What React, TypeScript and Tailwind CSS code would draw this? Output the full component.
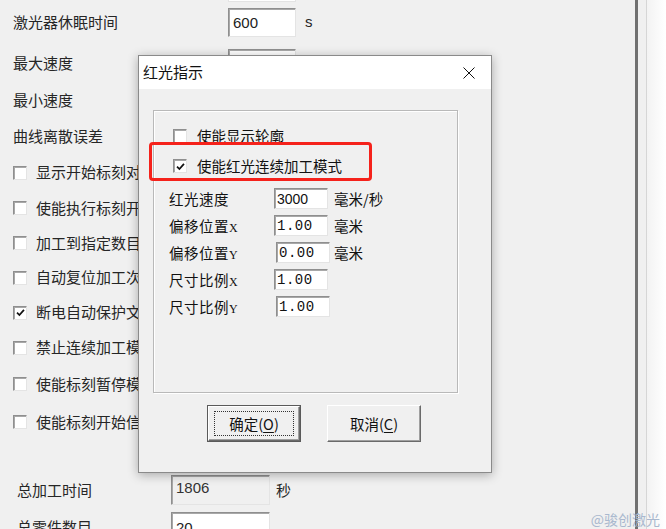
import type { ReactNode } from "react";

const sunken =
  "border border-t-[#8f8f8f] border-l-[#8f8f8f] border-r-[#e4e4e4] border-b-[#e4e4e4] shadow-[inset_1px_1px_0_#a8a8a8]";

function Tick() {
  return (
    <svg viewBox="0 0 12 12" className="h-[11px] w-[11px]">
      <path d="M2.2 6.2 L4.8 8.8 L9.8 3.2" fill="none" stroke="#111" strokeWidth="1.9" />
    </svg>
  );
}

function CheckBox({ checked = false }: { checked?: boolean }) {
  return (
    <span className={`flex h-[14px] w-[14px] shrink-0 items-center justify-center bg-white ${sunken}`}>
      {checked && <Tick />}
    </span>
  );
}

function Field({ value = "", className = "" }: { value?: string; className?: string }) {
  return (
    <div className={`flex shrink-0 items-center bg-white pl-[4px] ${sunken} ${className}`}>
      <span className="font-['Liberation_Sans',sans-serif] text-[15px] leading-none text-[#222]">{value}</span>
    </div>
  );
}

function OptionRow({ label, checked, h }: { label: string; checked?: boolean; h: string }) {
  return (
    <div className={`flex items-center gap-[9px] whitespace-nowrap pl-[13px] ${h}`}>
      <CheckBox checked={checked} />
      <span>{label}</span>
    </div>
  );
}

function SettingsPanel() {
  return (
    <div className="w-[635px] shrink-0 text-[15px] text-[#262626]">
      {/* tail of the row scrolled above */}
      <div className="pl-[228px]">
        <div className="h-[2px] w-[68px] border-x border-b border-[#e4e4e4] bg-white" />
      </div>

      <div className="flex h-[41px] items-center pl-[13px]">
        <span className="w-[215px]">激光器休眠时间</span>
        <Field value="600" className="h-[29px] w-[68px]" />
        <span className="ml-[9px] font-['Liberation_Sans',sans-serif]">s</span>
      </div>
      <div className="flex h-[40px] items-center pl-[13px]">
        <span className="w-[215px]">最大速度</span>
        <Field value="10000" className="h-[29px] w-[68px]" />
        <span className="ml-[9px] font-['Liberation_Sans',sans-serif]">s</span>
      </div>
      <div className="flex h-[35px] items-center pl-[13px]">
        <span className="w-[215px]">最小速度</span>
        <Field className="h-[29px] w-[68px]" />
      </div>
      <div className="flex h-[37px] items-center pl-[13px]">
        <span className="w-[215px]">曲线离散误差</span>
        <Field className="h-[29px] w-[68px]" />
      </div>

      <OptionRow h="h-[35px]" label="显示开始标刻对" />
      <OptionRow h="h-[36px]" label="使能执行标刻开" />
      <OptionRow h="h-[34px]" label="加工到指定数目" />
      <OptionRow h="h-[35px]" label="自动复位加工次" />
      <OptionRow h="h-[35px]" label="断电自动保护文" checked />
      <OptionRow h="h-[35px]" label="禁止连续加工模" />
      <OptionRow h="h-[38px]" label="使能标刻暂停模" />
      <OptionRow h="h-[38px]" label="使能标刻开始信" />

      <div className="h-[32px]" />

      <div className="flex h-[34px] items-center pl-[17px]">
        <span className="w-[154px]">总加工时间</span>
        <div className={`flex h-[30px] w-[99px] items-start bg-[#f0f0f0] pl-[4px] pt-[3px] ${sunken}`}>
          <span className="font-['Liberation_Sans',sans-serif] text-[15px] leading-[18px] text-[#333]">1806</span>
        </div>
        <span className="ml-[6px]">秒</span>
      </div>
      <div className="flex h-[40px] items-center pl-[17px]">
        <span className="w-[154px]">总零件数目</span>
        <Field value="20" className="h-[30px] w-[99px]" />
      </div>
    </div>
  );
}

function DialogField({ value, mono, className = "" }: { value: string; mono?: boolean; className?: string }) {
  return (
    <div className={`flex h-[21px] w-[54px] items-center bg-white pl-[2px] ${sunken} ${className}`}>
      <span
        className={
          mono
            ? "font-['Liberation_Mono',monospace] text-[14px] leading-none tracking-[0.5px]"
            : "font-['Liberation_Sans',sans-serif] text-[14px] leading-none"
        }
      >
        {value}
      </span>
    </div>
  );
}

function ParamRow({
  label,
  axis,
  value,
  unit,
  mono,
  shift,
}: {
  label: string;
  axis?: string;
  value: string;
  unit?: string;
  mono?: boolean;
  shift?: boolean;
}) {
  return (
    <div className="flex h-[27px] items-center">
      <span className="w-[105px] whitespace-nowrap tracking-[0.5px]">
        {label}
        {axis && <span className="font-['Liberation_Serif',serif] text-[12px]">{axis}</span>}
      </span>
      <DialogField value={value} mono={mono} className={shift ? "ml-[2px]" : ""} />
      {unit && <span className={`${shift ? "ml-[4px]" : "ml-[6px]"} whitespace-nowrap`}>{unit}</span>}
    </div>
  );
}

function Button({ children, primary }: { children: ReactNode; primary?: boolean }) {
  return (
    <div
      className={`flex h-[37px] w-[94px] items-center justify-center bg-[#f0f0f0] ${
        primary ? "border border-[#5a5a5a]" : ""
      }`}
    >
      <div className="flex h-full w-full items-center justify-center border border-t-white border-l-white border-r-[#6a6a6a] border-b-[#6a6a6a] shadow-[inset_-1px_-1px_0_#a0a0a0]">
        <div
          className={`flex h-[calc(100%-8px)] w-[calc(100%-10px)] items-center justify-center ${
            primary ? "border border-dotted border-[#333]" : ""
          }`}
        >
          {children}
        </div>
      </div>
    </div>
  );
}

function RedLightDialog() {
  return (
    <div className="absolute left-[138px] top-[55px] flex h-[418px] w-[354px] flex-col border border-[#8a8a8a] bg-[#f0f0f0] text-[14.5px] text-[#111] shadow-[0_2px_10px_rgba(0,0,0,0.3)]">
      <div className="flex h-[33px] shrink-0 items-center justify-between bg-white pl-[4px] pr-[16px]">
        <span className="text-[15px]">红光指示</span>
        <svg viewBox="0 0 12 12" className="h-[12px] w-[12px]">
          <path d="M0.5 0.5 L11.5 11.5 M11.5 0.5 L0.5 11.5" stroke="#111" strokeWidth="1" />
        </svg>
      </div>

      <div className="flex flex-col px-[14px] pt-[21px]">
        <div className="h-[283px] w-[305px] shrink-0 border border-[#b9b9b9] pl-[15px] pt-[10px] shadow-[inset_1px_1px_0_#fff,1px_1px_0_#fff]">
          <div className="flex h-[30px] items-center gap-[10px] pl-[4px]">
            <CheckBox />
            <span>使能显示轮廓</span>
          </div>
          <div className="flex h-[30px] items-center gap-[10px] pl-[4px]">
            <CheckBox checked />
            <span>使能红光连续加工模式</span>
          </div>
          <div className="mt-[4px] flex flex-col">
            <ParamRow label="红光速度" value="3000" unit="毫米/秒" />
            <ParamRow label="偏移位置" axis="X" value="1.00" unit="毫米" mono />
            <ParamRow label="偏移位置" axis="Y" value="0.00" unit="毫米" mono shift />
            <ParamRow label="尺寸比例" axis="X" value="1.00" mono />
            <ParamRow label="尺寸比例" axis="Y" value="1.00" mono shift />
          </div>
        </div>

        <div className="mt-[12px] flex gap-[26px] pl-[54px]">
          <Button primary>
            <span>
              确定(<span className="underline underline-offset-2">O</span>)
            </span>
          </Button>
          <Button>
            <span>
              取消(<span className="underline underline-offset-2">C</span>)
            </span>
          </Button>
        </div>
      </div>

      {/* highlight drawn round the continuous mode option */}
      <div className="pointer-events-none absolute left-[10px] top-[86px] h-[39px] w-[223px] rounded-[4px] border-[3px] border-[#f5221b]" />
    </div>
  );
}

export default function App() {
  return (
    <div className="relative h-[529px] w-[666px] overflow-hidden bg-[#f0f0f0] font-['Noto_Sans_CJK_SC',sans-serif]">
      <div className="flex h-full">
        <SettingsPanel />
        <div className="w-[3px] shrink-0 bg-[#707070]" />
        <div className="w-[8px] shrink-0 bg-[#f0f0f0]" />
        <div className="w-px shrink-0 bg-[#d6d6d6]" />
        <div className="flex-1 bg-gradient-to-r from-[#f3f3f3] to-white" />
      </div>

      <RedLightDialog />

      <span className="absolute right-[6px] top-[510px] text-[14px] leading-[18px] text-[#a9b8ce]">@骏创激光</span>
    </div>
  );
}
